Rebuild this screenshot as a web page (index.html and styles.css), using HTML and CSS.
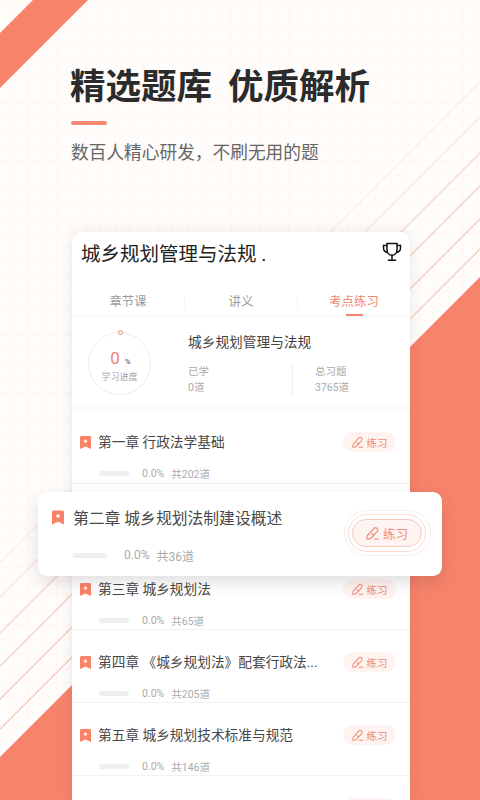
FILE: index.html
```html
<!DOCTYPE html>
<html lang="zh-CN">
  <head>
    <meta charset="UTF-8" />
    <meta name="viewport" content="width=device-width, initial-scale=1.0" />
    <title>精选题库</title>
    <link rel="stylesheet" href="styles.css">
  </head>
  <body>
    <div class="page">
      <!-- Background shapes -->
      <svg class="bg-shapes" width="480" height="800" viewBox="0 0 480 800">
        <polygon points="33,0 88,0 0,88 0,33" fill="#f8836b" />
        <polygon points="480,277 480,800 0,800 0,757" fill="#f8836b" />
        <g stroke-width="1.100" fill="none">
          <line x1="480" y1="82" x2="0" y2="562" stroke="#fbebe6" />
          <line x1="480" y1="117" x2="0" y2="597" stroke="#f9e0d8" />
          <line x1="480" y1="153" x2="0" y2="633" stroke="#f6cfc3" />
          <line x1="480" y1="186" x2="0" y2="666" stroke="#f3c6b8" />
          <line x1="480" y1="219" x2="0" y2="699" stroke="#f3c2b3" />
          <line x1="480" y1="249" x2="0" y2="729" stroke="#f3c2b3" />
        </g>
      </svg>

      <div class="header">
        <h1 class="headline"><span>精选题库</span><span>优质解析</span></h1>
        <div class="headline-rule"></div>
        <p class="subline">数百人精心研发，不刷无用的题</p>
      </div>

      <div class="card">
        <div class="card-top">
          <div class="card-title">城乡规划管理与法规 .</div>
          <svg class="trophy" width="20" height="20" viewBox="0 0 20 20" fill="none" stroke="#111" stroke-width="1.500">
            <path d="M5 1.500h10v6.500c0 3-2.200 5.200-5 5.200S5 11 5 8z" />
            <path d="M5 3.500H1.500v2.700c0 2.200 1.500 3.800 4.200 4.300M15 3.500h3.500v2.700c0 2.200-1.500 3.800-4.200 4.300" />
            <path d="M10 13.200v5M5.800 18.300h8.400" />
          </svg>
        </div>

        <div class="tabs">
          <div class="tab">章节课</div>
          <div class="tab">讲义</div>
          <div class="tab active">考点练习</div>
        </div>

        <div class="summary">
          <div class="progress-ring">
            <div class="progress-dot"></div>
            <div class="progress-value">0<span>%</span></div>
            <div class="progress-label">学习进度</div>
          </div>
          <div class="summary-info">
            <div class="summary-title">城乡规划管理与法规</div>
            <div class="stats">
              <div class="stat">
                <div>已学</div>
                <div>0道</div>
              </div>
              <div class="stat stat-total">
                <div>总习题</div>
                <div>3765道</div>
              </div>
            </div>
          </div>
        </div>

        <div class="chapters">
          <div class="chapter">
            <div class="chapter-head">
              <svg class="bookmark" viewBox="0 0 12 14"><path d="M1.500 0h9A1.500 1.500 0 0 1 12 1.500V14L6 11.300 0 14V1.500A1.500 1.500 0 0 1 1.500 0z" fill="#f98369" /><path d="M6 3.500v4M4 5.500h4" stroke="#fff" stroke-width="1.300" /></svg>
              <div class="chapter-name">第一章 行政法学基础</div>
              <div class="practice">
                <svg viewBox="0 0 14 14" fill="none" stroke="#ee8c76" stroke-width="1.200"><path d="M1.500 9.500 8 2.300a2.200 2.200 0 0 1 3.200 3L4.800 12.300c-1.200.8-2.500 1-3.800.7-.200-1.300 0-2.500.5-3.500zM5.500 7.300l2.700 2.700M8 13h5" /></svg>
                <span>练习</span>
              </div>
            </div>
            <div class="chapter-meta"><i class="meter"></i><span class="pct">0.0%</span><span>共202道</span></div>
          </div>
          <div class="chapter">
            <div class="chapter-head">
              <svg class="bookmark" viewBox="0 0 12 14"><path d="M1.500 0h9A1.500 1.500 0 0 1 12 1.500V14L6 11.300 0 14V1.500A1.500 1.500 0 0 1 1.500 0z" fill="#f98369" /><path d="M6 3.500v4M4 5.500h4" stroke="#fff" stroke-width="1.300" /></svg>
            </div>
          </div>
          <div class="chapter">
            <div class="chapter-head">
              <svg class="bookmark" viewBox="0 0 12 14"><path d="M1.500 0h9A1.500 1.500 0 0 1 12 1.500V14L6 11.300 0 14V1.500A1.500 1.500 0 0 1 1.500 0z" fill="#f98369" /><path d="M6 3.500v4M4 5.500h4" stroke="#fff" stroke-width="1.300" /></svg>
              <div class="chapter-name">第三章 城乡规划法</div>
              <div class="practice">
                <svg viewBox="0 0 14 14" fill="none" stroke="#ee8c76" stroke-width="1.200"><path d="M1.500 9.500 8 2.300a2.200 2.200 0 0 1 3.200 3L4.800 12.300c-1.200.8-2.500 1-3.800.7-.200-1.300 0-2.500.5-3.500zM5.500 7.300l2.700 2.700M8 13h5" /></svg>
                <span>练习</span>
              </div>
            </div>
            <div class="chapter-meta"><i class="meter"></i><span class="pct">0.0%</span><span>共65道</span></div>
          </div>
          <div class="chapter">
            <div class="chapter-head">
              <svg class="bookmark" viewBox="0 0 12 14"><path d="M1.500 0h9A1.500 1.500 0 0 1 12 1.500V14L6 11.300 0 14V1.500A1.500 1.500 0 0 1 1.500 0z" fill="#f98369" /><path d="M6 3.500v4M4 5.500h4" stroke="#fff" stroke-width="1.300" /></svg>
              <div class="chapter-name">第四章 《城乡规划法》配套行政法...</div>
              <div class="practice">
                <svg viewBox="0 0 14 14" fill="none" stroke="#ee8c76" stroke-width="1.200"><path d="M1.500 9.500 8 2.300a2.200 2.200 0 0 1 3.200 3L4.800 12.300c-1.200.8-2.500 1-3.800.7-.200-1.300 0-2.500.5-3.500zM5.500 7.300l2.700 2.700M8 13h5" /></svg>
                <span>练习</span>
              </div>
            </div>
            <div class="chapter-meta"><i class="meter"></i><span class="pct">0.0%</span><span>共205道</span></div>
          </div>
          <div class="chapter">
            <div class="chapter-head">
              <svg class="bookmark" viewBox="0 0 12 14"><path d="M1.500 0h9A1.500 1.500 0 0 1 12 1.500V14L6 11.300 0 14V1.500A1.500 1.500 0 0 1 1.500 0z" fill="#f98369" /><path d="M6 3.500v4M4 5.500h4" stroke="#fff" stroke-width="1.300" /></svg>
              <div class="chapter-name">第五章 城乡规划技术标准与规范</div>
              <div class="practice">
                <svg viewBox="0 0 14 14" fill="none" stroke="#ee8c76" stroke-width="1.200"><path d="M1.500 9.500 8 2.300a2.200 2.200 0 0 1 3.200 3L4.800 12.300c-1.200.8-2.500 1-3.800.7-.200-1.300 0-2.500.5-3.500zM5.500 7.300l2.700 2.700M8 13h5" /></svg>
                <span>练习</span>
              </div>
            </div>
            <div class="chapter-meta"><i class="meter"></i><span class="pct">0.0%</span><span>共146道</span></div>
          </div>
          <div class="chapter">
            <div class="chapter-head">
              <div class="chapter-name"></div>
              <div class="practice"></div>
            </div>
          </div>
        </div>
      </div>

      <!-- Highlighted chapter floats over the list -->
      <div class="float-card">
        <div class="float-main">
          <div class="float-head">
            <svg class="bookmark" viewBox="0 0 12 14"><path d="M1.500 0h9A1.500 1.500 0 0 1 12 1.500V14L6 11.300 0 14V1.500A1.500 1.500 0 0 1 1.500 0z" fill="#f98369" /><path d="M6 3.500v4M4 5.500h4" stroke="#fff" stroke-width="1.300" /></svg>
            <div class="float-name">第二章 城乡规划法制建设概述</div>
          </div>
          <div class="float-meta"><i class="meter"></i><span class="pct">0.0%</span><span>共36道</span></div>
        </div>
        <div class="float-button">
          <svg viewBox="0 0 14 14" fill="none" stroke="#ee8c76" stroke-width="1.200"><path d="M1.500 9.500 8 2.300a2.200 2.200 0 0 1 3.200 3L4.800 12.300c-1.200.8-2.500 1-3.800.7-.200-1.300 0-2.500.5-3.500zM5.500 7.300l2.700 2.700M8 13h5" /></svg>
          <span>练习</span>
        </div>
      </div>
    </div>
  </body>
</html>
```

FILE: styles.css
```css
* {
  box-sizing: border-box;
}
body {
  margin: 0;
  font-family: Roboto, "Noto Sans CJK SC", sans-serif;
}
.page {
  position: relative;
  width: 480px;
  height: 800px;
  overflow: hidden;
  background-color: #fffdfc;
  background-image:
    linear-gradient(#fff8f5 2px, transparent 2px),
    linear-gradient(90deg, #fff8f5 2px, transparent 2px);
  background-size: 14.500px 14.500px;
  background-position: 12.500px 0.500px;
}
.bg-shapes {
  position: absolute;
  top: 0;
  left: 0;
}
.header {
  position: relative;
  height: 232px;
  padding: 64px 0 0 70px;
}
.headline {
  display: flex;
  gap: 16px;
  margin: 0;
  font-size: 35.500px;
  line-height: 46px;
  font-weight: 700;
  color: #2b2b2b;
}
.headline-rule {
  width: 36px;
  height: 4px;
  margin: 11px 0 0 1px;
  border-radius: 2px;
  background-color: #f58a72;
}
.subline {
  margin: 15px 0 0 1px;
  font-size: 17.700px;
  line-height: 26px;
  color: #666;
}
.card {
  position: relative;
  width: 338px;
  height: 568px;
  margin-left: 72px;
  border-radius: 10px 10px 0 0;
  background-color: #fff;
  box-shadow: 0 0 14px rgba(40, 30, 30, 0.1);
}
.card-top {
  display: flex;
  justify-content: space-between;
  align-items: center;
  height: 42px;
  padding: 0 8px 0 9px;
}
.card-title {
  margin-top: -2px;
  font-size: 19.500px;
  color: #222;
}
.trophy {
  margin-bottom: 2px;
}
.tabs {
  display: flex;
  align-items: flex-start;
  height: 44px;
  margin-top: -1px;
  padding-top: 22px;
  border-bottom: 1px solid #f5f5f5;
}
.tab {
  position: relative;
  flex: 1;
  height: 14px;
  line-height: 14px;
  text-align: center;
  font-size: 12.400px;
  color: #9c9c9c;
}
.tab + .tab {
  border-left: 1px solid #f4f4f4;
}
.tab.active {
  color: #f0866e;
}
.tab.active::after {
  content: "";
  position: absolute;
  left: 50%;
  bottom: -7px;
  width: 17px;
  height: 2px;
  margin-left: -8px;
  background-color: #f0866e;
}
.summary {
  display: flex;
  height: 94px;
  padding: 15px 0 0 16px;
  border-bottom: 4px solid #f9f9f9;
}
.progress-ring {
  position: relative;
  width: 63px;
  height: 63px;
  border: 1px solid #ececec;
  border-radius: 50%;
  text-align: center;
}
.progress-dot {
  position: absolute;
  top: -3px;
  left: 29px;
  width: 5px;
  height: 5px;
  border: 1px solid #f0866e;
  border-radius: 50%;
  background-color: #fff;
}
.progress-value {
  margin-top: 15px;
  padding-left: 2px;
  font-size: 17px;
  line-height: 20px;
  color: #f0866e;
}
.progress-value span {
  margin-left: 5px;
  font-size: 8px;
  font-weight: 700;
  color: #777;
}
.progress-label {
  margin-top: -2px;
  font-size: 9px;
  line-height: 14px;
  color: #a5a5a5;
}
.summary-info {
  margin-left: 37px;
  padding-top: 1px;
}
.summary-title {
  font-size: 13.700px;
  line-height: 18px;
  color: #444;
}
.stats {
  display: flex;
  margin-top: 13px;
}
.stat {
  width: 104px;
  font-size: 10.500px;
  line-height: 16px;
  color: #aaa;
}
.stat-total {
  width: auto;
  padding: 0 0 0 22px;
  border-left: 1px solid #eee;
}
.chapter {
  height: 73px;
  padding-top: 22px;
  border-bottom: 1px solid #f2f2f2;
}
.chapter:first-child {
  padding-top: 21px;
}
.chapter-head {
  display: flex;
  align-items: center;
  height: 20px;
  padding: 0 14px 0 8px;
}
.bookmark {
  flex: none;
  width: 11px;
  height: 13px;
}
.chapter-name {
  flex: 1;
  margin-left: 7px;
  padding-bottom: 2px;
  font-size: 13.700px;
  color: #484848;
  white-space: nowrap;
}
.practice {
  display: flex;
  align-items: center;
  justify-content: center;
  gap: 3px;
  width: 53px;
  height: 20px;
  border-radius: 10px;
  background-color: #fef3f0;
  font-size: 10.500px;
  color: #ee8c76;
}
.practice svg {
  width: 12px;
  height: 12px;
}
.chapter-meta {
  display: flex;
  align-items: center;
  height: 14px;
  margin-top: 14px;
  padding-left: 27px;
  font-size: 10.500px;
  color: #aaa;
}
.meter {
  width: 30px;
  height: 5px;
  margin-right: 13px;
  border-radius: 3px;
  background-color: #efefef;
}
.pct {
  margin-right: 7px;
}
.float-card {
  position: absolute;
  top: 492px;
  left: 38px;
  display: flex;
  justify-content: space-between;
  width: 404px;
  height: 84px;
  padding: 15px 20px 0 14px;
  border-radius: 9px;
  background-color: #fff;
  box-shadow: 0 6px 16px rgba(60, 50, 50, 0.16);
}
.float-head {
  display: flex;
  align-items: center;
  height: 22px;
  margin-top: -1px;
}
.float-head .bookmark {
  width: 12px;
  height: 15px;
}
.float-name {
  margin-left: 9px;
  font-size: 15.800px;
  color: #484848;
}
.float-meta {
  display: flex;
  align-items: center;
  height: 16px;
  margin-top: 19px;
  padding-left: 21px;
  font-size: 12px;
  color: #aaa;
}
.float-meta .meter {
  width: 34px;
  margin-right: 17px;
}
.float-meta .pct {
  margin-right: 7px;
}
.float-button {
  position: relative;
  display: flex;
  align-items: center;
  justify-content: center;
  gap: 3px;
  width: 70px;
  height: 28px;
  margin-top: 12px;
  border: 1px solid #f6c9bc;
  border-radius: 14px;
  background-color: #fef4f1;
  font-size: 12.500px;
  color: #ee8c76;
}
.float-button svg {
  width: 14px;
  height: 14px;
}
.float-button::before,
.float-button::after {
  content: "";
  position: absolute;
  border-radius: 30px;
}
.float-button::before {
  top: -6px;
  right: -5px;
  bottom: -6px;
  left: -5px;
  border: 1px solid #fadcd3;
}
.float-button::after {
  top: -10px;
  right: -10px;
  bottom: -10px;
  left: -9px;
  border: 1px solid #fdeee9;
}
```
